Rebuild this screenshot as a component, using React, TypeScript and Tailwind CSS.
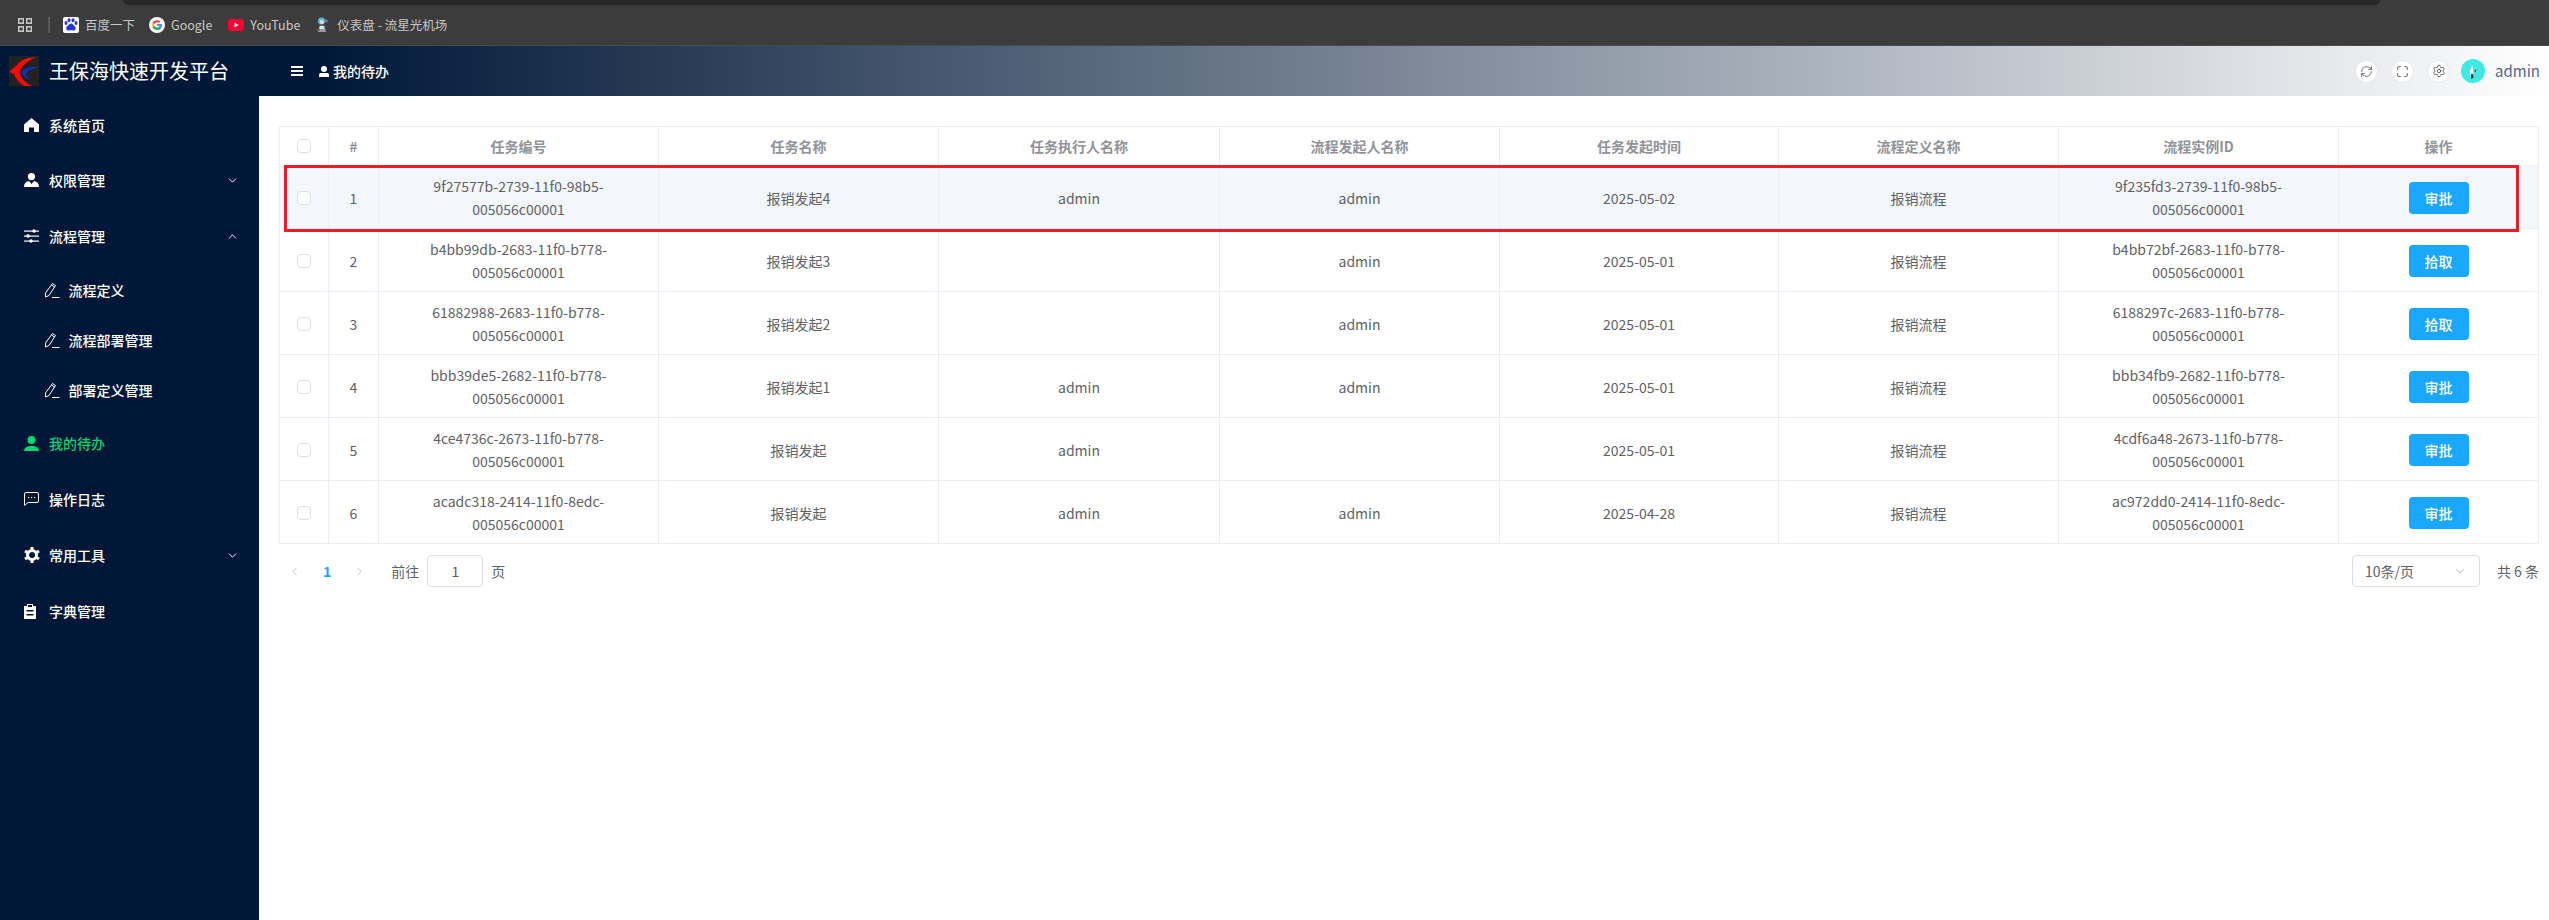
import React from 'react';
import { ChevronDown, ChevronUp, ChevronLeft, ChevronRight, RefreshCw, Maximize, Settings } from 'lucide-react';

const cjk = { fontFamily: '"Noto Sans CJK SC", sans-serif' };

interface TaskRow {
  id: string;
  name: string;
  assignee: string;
  starter: string;
  time: string;
  instance: string;
  action: string;
}

const rows: TaskRow[] = [
  { id: '9f27577b-2739-11f0-98b5-005056c00001', name: '报销发起4', assignee: 'admin', starter: 'admin', time: '2025-05-02', instance: '9f235fd3-2739-11f0-98b5-005056c00001', action: '审批' },
  { id: 'b4bb99db-2683-11f0-b778-005056c00001', name: '报销发起3', assignee: '', starter: 'admin', time: '2025-05-01', instance: 'b4bb72bf-2683-11f0-b778-005056c00001', action: '拾取' },
  { id: '61882988-2683-11f0-b778-005056c00001', name: '报销发起2', assignee: '', starter: 'admin', time: '2025-05-01', instance: '6188297c-2683-11f0-b778-005056c00001', action: '拾取' },
  { id: 'bbb39de5-2682-11f0-b778-005056c00001', name: '报销发起1', assignee: 'admin', starter: 'admin', time: '2025-05-01', instance: 'bbb34fb9-2682-11f0-b778-005056c00001', action: '审批' },
  { id: '4ce4736c-2673-11f0-b778-005056c00001', name: '报销发起', assignee: 'admin', starter: '', time: '2025-05-01', instance: '4cdf6a48-2673-11f0-b778-005056c00001', action: '审批' },
  { id: 'acadc318-2414-11f0-8edc-005056c00001', name: '报销发起', assignee: 'admin', starter: 'admin', time: '2025-04-28', instance: 'ac972dd0-2414-11f0-8edc-005056c00001', action: '审批' },
];

const heads = ['任务编号', '任务名称', '任务执行人名称', '流程发起人名称', '任务发起时间', '流程定义名称', '流程实例ID'];

// sidebar icons
const HomeIcon = () => (
  <svg width="15" height="14" viewBox="0 0 15 14" fill="currentColor"><path d="M7.5 0 15 6.5V14h-5V9.5H5V14H0V6.5z" /></svg>
);
const UserTieIcon = () => (
  <svg width="15" height="14" viewBox="0 0 15 14" fill="currentColor"><circle cx="7.5" cy="3.6" r="3.6" /><path d="M0 14c0-3.4 2-5.4 5-5.9l2.5 3 2.5-3c3 .5 5 2.500 5 5.900z" /></svg>
);
const UserIcon = () => (
  <svg width="15" height="15" viewBox="0 0 15 15" fill="currentColor"><circle cx="7.500" cy="4" r="4" /><path d="M0 15c0-3 2.500-5 7.500-5s7.500 2 7.500 5z" /></svg>
);
const SlidersIcon = () => (
  <svg width="15" height="14" viewBox="0 0 15 14" fill="currentColor">
    <rect y="1.500" width="15" height="1.200" />
    <rect y="6.500" width="15" height="1.200" />
    <rect y="11.500" width="15" height="1.200" />
    <circle cx="10" cy="2" r="1.700" />
    <circle cx="4" cy="7" r="1.700" />
    <circle cx="7" cy="12" r="1.700" />
  </svg>
);
const PencilIcon = () => (
  <svg width="16" height="16" viewBox="0 0 16 16" fill="none" stroke="currentColor" strokeWidth="1"><path d="M1.500 11 8.500 1.500l3 2L5 13.500l-3.500 1.500z" /><path d="M7.500 3 10.500 5" /><path d="M8 15.500h7.500" /></svg>
);
const ChatIcon = () => (
  <svg width="15" height="14" viewBox="0 0 15 14" fill="none" stroke="currentColor" strokeWidth="1"><path d="M2 .500h11a1.500 1.500 0 0 1 1.500 1.500v7a1.500 1.500 0 0 1-1.500 1.500H4l-3.500 3V2A1.500 1.500 0 0 1 2 .500z" /><path d="M4 5.500h1.200M7 5.500h1.200M10 5.500h1.200" strokeWidth="1.200" /></svg>
);
const GearIcon = () => (
  <svg width="16" height="16" viewBox="0 0 16 16" fill="none" stroke="currentColor"><circle cx="8" cy="8" r="4.500" strokeWidth="3" /><path d="M8 0v3M8 13v3M1 4l2.500 1.500M12.500 10.500 15 12M1 12l2.500-1.500M12.500 5.500 15 4" strokeWidth="3" /></svg>
);
const ClipboardIcon = () => (
  <svg width="12" height="15" viewBox="0 0 12 15" fill="currentColor"><path d="M3 0h6v2h3v13H0V2h3zM4 1v2h4V1zM2.500 6v1.500h7V6zm0 4v1.500h7V10z" fillRule="evenodd" /></svg>
);

// bookmark favicons
const AppsIcon = () => (
  <svg width="14" height="14" viewBox="0 0 14 14" fill="none" stroke="#c7c7c7" strokeWidth="1.500">
    <rect x=".750" y=".750" width="4.500" height="4.500" />
    <rect x="8.750" y=".750" width="4.500" height="4.500" />
    <rect x=".750" y="8.750" width="4.500" height="4.500" />
    <rect x="8.750" y="8.750" width="4.500" height="4.500" />
  </svg>
);
const BaiduIcon = () => (
  <svg width="16" height="16" viewBox="0 0 16 16">
    <rect width="16" height="16" rx="2" fill="#fff" />
    <g fill="#2932e1">
      <ellipse cx="3" cy="6" rx="1.500" ry="2" />
      <ellipse cx="6" cy="3.200" rx="1.500" ry="2" />
      <ellipse cx="10" cy="3.200" rx="1.500" ry="2" />
      <ellipse cx="13" cy="6" rx="1.500" ry="2" />
      <path d="M8 6.500c2 0 2.500 2 4 3 1.500 1.500.5 4.500-2 4-1-.2-1.500-.3-2-.3s-1 .1-2 .3c-2.500.5-3.500-2.500-2-4 1.500-1 2-3 4-3z" />
    </g>
  </svg>
);
const GoogleIcon = () => (
  <svg width="16" height="16" viewBox="0 0 16 16">
    <circle cx="8" cy="8" r="8" fill="#fff" />
    <path d="M12.700 6.900H8v1.900h2.700a2.900 2.900 0 0 1-2.700 2A3 3 0 0 1 5.300 9l-1.700 1.300A5 5 0 0 0 8 13c2.800 0 4.900-2 4.900-5 0-.4 0-.8-.2-1.100z" fill="#4285f4" />
    <path d="M5.300 9.100A3 3 0 0 1 5.300 7L3.600 5.700a5 5 0 0 0 0 4.600z" fill="#fbbc05" />
    <path d="M8 5.200c.8 0 1.400.3 1.900.7l1.500-1.400A5 5 0 0 0 3.600 5.700L5.300 7A3 3 0 0 1 8 5.200z" fill="#ea4335" />
    <path d="M8 10.800A3 3 0 0 1 5.300 9l-1.700 1.300A5 5 0 0 0 8 13c1.300 0 2.500-.4 3.300-1.200l-1.600-1.400c-.5.300-1 .4-1.700.4z" fill="#34a853" />
  </svg>
);
const YoutubeIcon = () => (
  <svg width="16" height="12" viewBox="0 0 16 12">
    <rect width="16" height="12" rx="3" fill="#ff0033" />
    <path d="M6.500 3.500v5L10.500 6z" fill="#fff" />
  </svg>
);
const AnimeIcon = () => (
  <svg width="16" height="16" viewBox="0 0 16 16">
    <circle cx="6.500" cy="4" r="3.500" fill="#5fb7d6" />
    <circle cx="6.800" cy="5" r="2" fill="#e8dcd2" />
    <path d="M3 15l1.500-6.500h5L11 15z" fill="#8f9aa8" />
    <path d="M5 9h3.500l.7 3H4.500z" fill="#dfe3e8" />
    <path d="M10 2l3 1-1 3-2-1z" fill="#6b7684" />
    <path d="M1 14l3-3 1 3z" fill="#5a6470" />
  </svg>
);

const Logo = () => (
  <svg width="30" height="30" viewBox="0 0 30 30">
    <rect width="30" height="30" fill="#222222" />
    <path d="M27 1C18 2 13 3 9 8L0 16l5 2c2 5 5 9 10 12h8C16 27 11 21 11 16 12 10 19 5 27 1z" fill="#f60a0a" />
    <path d="M30 11C22 10 15 12 12 16c2 4 5 7 10 8-3-2-5-4-5-7 3-3 8-5 13-6z" fill="#0f2fb0" />
  </svg>
);

const Avatar = () => (
  <svg width="24" height="24" viewBox="0 0 24 24">
    <circle cx="12" cy="12" r="12" fill="#3deae6" />
    <path d="M11 6c1.500 2 1.500 6 .5 9l-2 3-.5-6z" fill="#fff" />
    <path d="M10 15l2 .5.500 3-2 1.500z" fill="#1a1a1a" />
    <path d="M13 12l2.500-2-1 3z" fill="#333" />
  </svg>
);

interface MenuItemProps {
  icon: React.ReactNode;
  label: string;
  chevron?: 'up' | 'down';
  active?: boolean;
  lifted?: boolean;
}

const MenuItem: React.FC<MenuItemProps> = ({ icon, label, chevron, active, lifted }) => (
  <div className={`flex h-14 items-center pl-6 pr-5 text-sm font-medium ${lifted ? 'pb-0.5' : ''} ${active ? 'text-[#00d56f]' : 'text-white'}`}>
    <span className="flex w-[25px] shrink-0 items-center">{icon}</span>
    <span className="flex-1">{label}</span>
    {chevron === 'down' && <ChevronDown size={13} strokeWidth={1.75} />}
    {chevron === 'up' && <ChevronUp size={13} strokeWidth={1.75} />}
  </div>
);

const SubItem: React.FC<{ label: string }> = ({ label }) => (
  <div className="flex h-[50px] items-center pl-11 text-sm font-medium text-white">
    <span className="flex w-[24.5px] shrink-0 items-center"><PencilIcon /></span>
    <span>{label}</span>
  </div>
);

const Sidebar = () => (
  <aside className="h-full w-[259px] shrink-0 bg-[#001737] pt-px">
    <MenuItem icon={<HomeIcon />} label="系统首页" />
    <MenuItem icon={<UserTieIcon />} label="权限管理" chevron="down" lifted />
    <MenuItem icon={<SlidersIcon />} label="流程管理" chevron="up" lifted />
    <SubItem label="流程定义" />
    <SubItem label="流程部署管理" />
    <SubItem label="部署定义管理" />
    <MenuItem icon={<UserIcon />} label="我的待办" active />
    <MenuItem icon={<ChatIcon />} label="操作日志" />
    <MenuItem icon={<GearIcon />} label="常用工具" chevron="down" />
    <MenuItem icon={<ClipboardIcon />} label="字典管理" />
  </aside>
);

const Bookmark: React.FC<{ icon: React.ReactNode; label: string; className: string }> = ({ icon, label, className }) => (
  <div className={`flex items-center gap-1.5 ${className}`}>
    <span className="flex w-4 justify-center">{icon}</span>
    <span className="whitespace-nowrap text-[12.5px] text-[#c7c7c7]">{label}</span>
  </div>
);

const BrowserBar = () => (
  <div className="flex h-[46px] flex-col border-b border-[#4a4a4a] bg-[#3c3c3c]">
    <div className="ml-[123px] mr-[169px] h-[5px] rounded-b-lg bg-[#282828]" />
    <div className="flex flex-1 items-center pl-[18px]">
      <AppsIcon />
      <div className="ml-4 h-4 w-0.5 bg-[#5a5a5a]" />
      <Bookmark icon={<BaiduIcon />} label="百度一下" className="ml-[13px]" />
      <Bookmark icon={<GoogleIcon />} label="Google" className="ml-3.5" />
      <Bookmark icon={<YoutubeIcon />} label="YouTube" className="ml-4" />
      <Bookmark icon={<AnimeIcon />} label="仪表盘 - 流星光机场" className="ml-[15px]" />
    </div>
  </div>
);

const RoundButton: React.FC<{ children: React.ReactNode }> = ({ children }) => (
  <div className="flex h-[23px] w-[23px] items-center justify-center rounded-full border border-[#e4e7f0] bg-white text-[#555]">
    {children}
  </div>
);

const UserIconSmall = () => (
  <svg width="10" height="11" viewBox="0 0 10 11" fill="currentColor" className="block"><circle cx="5" cy="3" r="3" /><path d="M0 11V8.500c0-1 1-1.500 2-1.500h6c1 0 2 .5 2 1.500V11z" /></svg>
);

const TopBar = () => (
  <header className="flex h-[50px] items-center bg-[linear-gradient(90deg,#001737_12.5%,#ffffff_100%)]">
    <div className="flex w-[259px] shrink-0 items-center pl-[9px]">
      <Logo />
      <span className="ml-[10px] text-xl text-white">王保海快速开发平台</span>
    </div>
    <div className="ml-8 flex flex-col gap-[2px]">
      <div className="h-0.5 w-3 bg-white" />
      <div className="h-0.5 w-3 bg-white" />
      <div className="h-0.5 w-3 bg-white" />
    </div>
    <span className="ml-4 text-white"><UserIconSmall /></span>
    <span className="ml-1 text-sm font-medium text-white">我的待办</span>
    <div className="ml-auto flex items-center">
      <div className="flex items-center gap-[13px]">
        <RoundButton><RefreshCw size={13} strokeWidth={1.5} /></RoundButton>
        <RoundButton><Maximize size={13} strokeWidth={1.75} /></RoundButton>
        <RoundButton><Settings size={14} strokeWidth={1.5} /></RoundButton>
      </div>
      <div className="ml-[11px]"><Avatar /></div>
      <span className="ml-2.5 w-[54px] text-[15px] text-[#54698a]">admin</span>
    </div>
  </header>
);

const Checkbox = () => (
  <span className="mx-auto block h-3.5 w-3.5 rounded-sm border border-[#dcdfe6] bg-white" />
);

const TaskTable = () => (
  <div className="relative">
    <table className="w-[2260px] table-fixed border-collapse text-center text-sm text-[#606266]">
      <colgroup>
        <col className="w-[49px]" />
        <col className="w-[50px]" />
        <col className="w-[280px]" />
        <col className="w-[280px]" />
        <col className="w-[281px]" />
        <col className="w-[280px]" />
        <col className="w-[279px]" />
        <col className="w-[280px]" />
        <col className="w-[280px]" />
        <col className="w-[200px]" />
      </colgroup>
      <thead>
        <tr className="h-[39px] font-bold text-[#909399]">
          <th className="border border-[#ebeef5] font-bold"><Checkbox /></th>
          <th className="border border-[#ebeef5] font-bold">#</th>
          {heads.map(h => (
            <th key={h} className="border border-[#ebeef5] font-bold">{h}</th>
          ))}
          <th className="border border-[#ebeef5] font-bold">操作</th>
        </tr>
      </thead>
      <tbody>
        {rows.map((r, i) => (
          <tr key={r.id} className={`h-[63px] leading-[23px] ${i === 0 ? 'bg-[#f3f6fb]' : ''}`}>
            <td className="border border-[#ebeef5] pt-px"><Checkbox /></td>
            <td className="border border-[#ebeef5] pt-0.5">{i + 1}</td>
            <td className="border border-[#ebeef5] px-3.5 pt-0.5">{r.id}</td>
            <td className="border border-[#ebeef5] px-3.5 pt-0.5">{r.name}</td>
            <td className="border border-[#ebeef5] px-3.5 pt-0.5">{r.assignee}</td>
            <td className="border border-[#ebeef5] px-3.5 pt-0.5">{r.starter}</td>
            <td className="border border-[#ebeef5] px-3.5 pt-0.5">{r.time}</td>
            <td className="border border-[#ebeef5] px-3.5 pt-0.5">报销流程</td>
            <td className="border border-[#ebeef5] px-3.5 pt-0.5">{r.instance}</td>
            <td className="border border-[#ebeef5] pt-px">
              <button className="h-8 w-[60px] rounded bg-[#1aa7ff] text-sm font-medium text-white">{r.action}</button>
            </td>
          </tr>
        ))}
      </tbody>
    </table>
    {/* red annotation drawn over the first row */}
    <div className="absolute left-[5px] top-[39px] h-[67px] w-[2235px] border-[3px] border-[#ed1c24]" />
  </div>
);

const Pagination = () => (
  <div className="mt-[11px] flex h-8 items-center text-sm text-[#606266]">
    <ChevronLeft size={13} strokeWidth={1.75} className="ml-[9px] text-[#c0c4cc]" />
    <span className="ml-[22px] font-bold text-[#1aa7ff]">1</span>
    <ChevronRight size={13} strokeWidth={1.75} className="ml-[22px] text-[#c0c4cc]" />
    <span className="ml-[25px]">前往</span>
    <div className="ml-2 flex h-8 w-14 items-center justify-center rounded border border-[#dcdfe6]">1</div>
    <span className="ml-2">页</span>
    <div className="ml-auto flex h-8 w-[128px] items-center justify-between rounded border border-[#dcdfe6] pl-3 pr-3">
      <span>10条/页</span>
      <ChevronDown size={14} strokeWidth={1.75} className="text-[#c0c4cc]" />
    </div>
    <span className="ml-[17px]">共 6 条</span>
  </div>
);

const App: React.FC = () => (
  <div className="flex h-[920px] w-[2549px] flex-col overflow-hidden bg-white" style={cjk}>
    <BrowserBar />
    <TopBar />
    <div className="flex min-h-0 flex-1">
      <Sidebar />
      <main className="w-[2270px] pl-5 pt-[30px]">
        <div className="w-[2260px]">
          <TaskTable />
          <Pagination />
        </div>
      </main>
    </div>
  </div>
);

export default App;
